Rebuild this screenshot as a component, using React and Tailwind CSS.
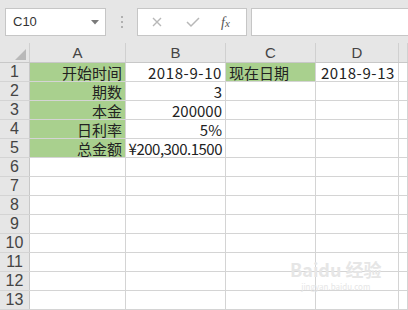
import React from "react";

const cols = ["A", "B", "C", "D", ""];
const widths = ["w-[96px]", "w-[100px]", "w-[90px]", "w-[83px]", "flex-1"];

const data = {
  1: [
    { t: "开始时间", green: true, align: "right" },
    { t: "2018-9-10", align: "right", mono: true },
    { t: "现在日期", green: true, align: "left" },
    { t: "2018-9-13", align: "right", mono: true },
  ],
  2: [
    { t: "期数", green: true, align: "right" },
    { t: "3", align: "right" },
  ],
  3: [
    { t: "本金", green: true, align: "right" },
    { t: "200000", align: "right" },
  ],
  4: [
    { t: "日利率", green: true, align: "right" },
    { t: "5%", align: "right" },
  ],
  5: [
    { t: "总金额", green: true, align: "right" },
    { t: "¥200,300.1500", align: "right", tight: true },
  ],
};

const font = { fontFamily: '"Noto Sans CJK SC", "Liberation Sans", sans-serif' };
const latin = { fontFamily: '"Liberation Sans", "Noto Sans CJK SC", sans-serif' };

const Cell = ({ cell, width }) => {
  const c = cell || {};
  return (
    <div
      className={`${width} h-full shrink-0 border-r border-[#d4d4d4] flex items-center px-[3px] leading-none overflow-visible whitespace-nowrap text-[15px] text-[#222] ${
        c.green ? "bg-[#a9d08e]" : "bg-white"
      } ${c.align === "right" ? "justify-end" : "justify-start"} ${c.tight ? "tracking-[-0.5px]" : ""} ${c.mono ? "tracking-[0.6px]" : ""}`}
    >
      {c.t}
    </div>
  );
};

export default function App() {
  const rows = Array.from({ length: 13 }, (_, i) => i + 1);

  return (
    <div className="w-[408px] h-[310px] overflow-hidden bg-white relative" style={font}>
      {/* formula bar */}
      <div className="h-[43px] bg-[#e6e6e6] flex items-start pt-[8px] pl-[5px]">
        <div className="w-[101px] h-[28px] bg-white border border-[#c6c6c6] flex items-center justify-between pl-[7px] pr-[6px]">
          <span className="text-[13px] text-[#333]" style={latin}>
            C10
          </span>
          <svg width="8" height="5" viewBox="0 0 8 5">
            <path d="M0 0 L8 0 L4 4.5 Z" fill="#7a7a7a" />
          </svg>
        </div>
        <div className="w-[31px] h-[28px] flex flex-col items-center justify-center gap-[3px]">
          <span className="w-[2px] h-[2px] bg-[#b0b0b0]" />
          <span className="w-[2px] h-[2px] bg-[#b0b0b0]" />
          <span className="w-[2px] h-[2px] bg-[#b0b0b0]" />
        </div>
        <div className="w-[110px] h-[28px] bg-white border border-[#c6c6c6] flex items-center pl-[13px]">
          <svg width="12" height="12" viewBox="0 0 12 12">
            <path d="M2 2 L10 10 M10 2 L2 10" stroke="#b8b8b8" strokeWidth="1.4" />
          </svg>
          <svg width="14" height="12" viewBox="0 0 14 12" className="ml-[23px]">
            <path d="M1 6 L5 10 L13 2" stroke="#b8b8b8" strokeWidth="1.5" fill="none" />
          </svg>
          <span
            className="ml-[21px] text-[14px] italic text-[#555]"
            style={{ fontFamily: '"Liberation Serif", serif' }}
          >
            f<span className="text-[11px]">x</span>
          </span>
        </div>
        <div className="ml-[4px] flex-1 h-[28px] bg-white border border-[#c6c6c6] border-r-0" />
      </div>

      {/* column headers */}
      <div className="h-[20px] flex bg-[#e6e6e6] border-b border-[#c8c8c8]">
        <div className="w-[30px] shrink-0 h-full border-r border-[#d0d0d0] flex items-end justify-end pr-[3px] pb-[2px]">
          <svg width="11" height="11" viewBox="0 0 11 11">
            <path d="M11 0 L11 11 L0 11 Z" fill="#b9b9b9" />
          </svg>
        </div>
        {cols.map((c, i) => (
          <div
            key={i}
            className={`${widths[i]} shrink-0 h-full border-r border-[#d0d0d0] flex items-center justify-center leading-none text-[15px] text-[#444]`}
            style={latin}
          >
            {c}
          </div>
        ))}
      </div>

      {/* grid */}
      {rows.map((r) => (
        <div key={r} className="h-[19px] flex border-b border-[#d4d4d4]">
          <div
            className="w-[30px] shrink-0 h-full bg-[#e6e6e6] border-r border-[#c8c8c8] flex items-center justify-center leading-none text-[16px] text-[#444]"
            style={latin}
          >
            {r}
          </div>
          {widths.map((w, i) => (
            <Cell key={i} width={w} cell={(data[r] || [])[i]} />
          ))}
        </div>
      ))}

      {/* watermark */}
      <div className="absolute left-[290px] top-[260px] flex flex-col items-center text-[#e6e6e6] pointer-events-none">
        <span className="text-[18px] font-bold leading-none">Baidu 经验</span>
        <span className="text-[8px] leading-none mt-[5px]">jingyan.baidu.com</span>
      </div>
    </div>
  );
}
